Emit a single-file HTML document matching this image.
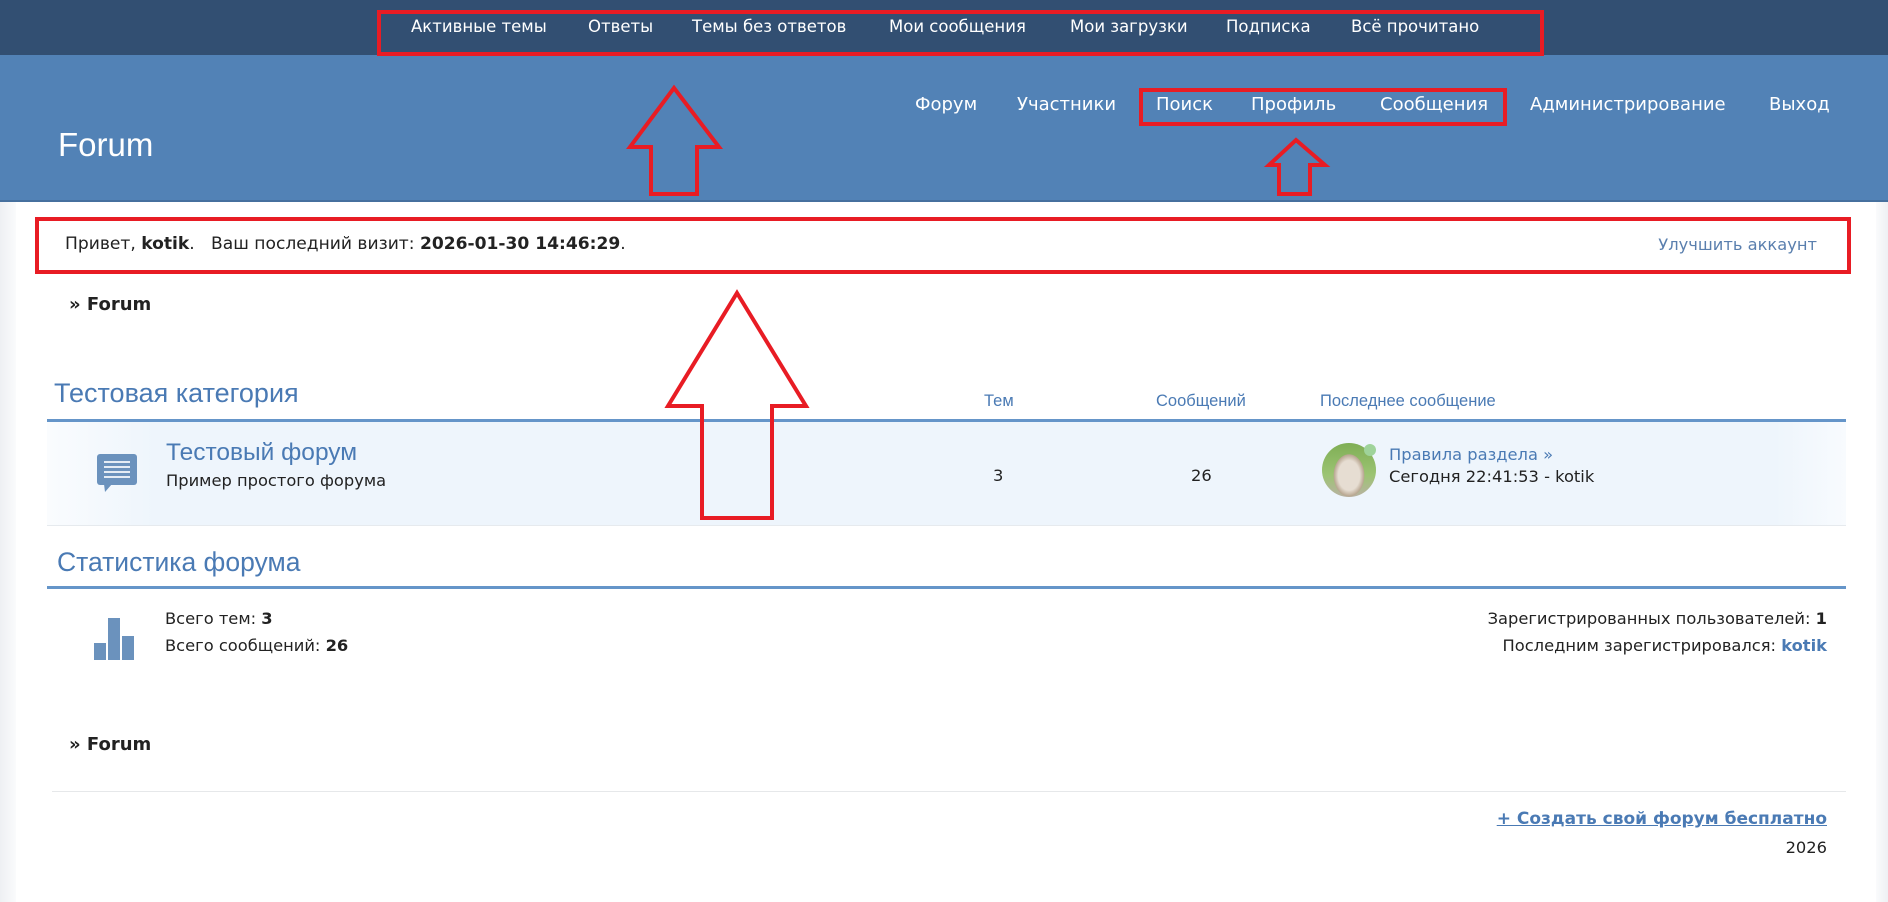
<!DOCTYPE html>
<html><head><meta charset="utf-8"><style>
*{margin:0;padding:0;box-sizing:border-box}
body{width:1888px;height:902px;position:relative;overflow:hidden;background:#fff;font-family:"DejaVu Sans","Liberation Sans",sans-serif;color:#222}
.a{position:absolute;white-space:nowrap}
.L{font-family:"Liberation Sans",Arial,sans-serif}
.top{left:0;top:0;width:1888px;height:55px;background:#324f72}
.hdr{left:0;top:55px;width:1888px;height:147px;background:#5282b6;border-bottom:2px solid #46709e}
.tn{top:17px;color:#fff;font-size:16.5px}
.sn{top:94px;color:#fff;font-size:18px}
.box{border:4px solid #e81c24}
.blue{color:#4a7ab4}
.lbl{font-size:16.5px;top:392px}
.t{font-size:16.3px}
</style></head><body>
<div class="a" style="left:0;top:202px;width:16px;height:700px;background:linear-gradient(90deg,#eef0f3,#fafbfc)"></div>
<div class="a" style="right:0;top:202px;width:12px;height:700px;background:linear-gradient(90deg,#fafbfc,#eef0f3)"></div>
<div class="a top"></div>
<div class="a hdr"></div>
<div class="a tn" style="left:411px">Активные темы</div>
<div class="a tn" style="left:588px">Ответы</div>
<div class="a tn" style="left:692px">Темы без ответов</div>
<div class="a tn" style="left:889px">Мои сообщения</div>
<div class="a tn" style="left:1070px">Мои загрузки</div>
<div class="a tn" style="left:1226px">Подписка</div>
<div class="a tn" style="left:1351px">Всё прочитано</div>
<div class="a box" style="left:377px;top:10px;width:1167px;height:46px"></div>
<div class="a sn" style="left:915px">Форум</div>
<div class="a sn" style="left:1017px">Участники</div>
<div class="a sn" style="left:1156px">Поиск</div>
<div class="a sn" style="left:1251px">Профиль</div>
<div class="a sn" style="left:1380px">Сообщения</div>
<div class="a sn" style="left:1530px">Администрирование</div>
<div class="a sn" style="left:1769px">Выход</div>
<div class="a box" style="left:1139px;top:88px;width:368px;height:38px"></div>
<div class="a L" style="left:58px;top:126px;color:#fff;font-size:33px">Forum</div>

<div class="a box" style="left:35px;top:217px;width:1816px;height:57px"></div>
<div class="a" style="left:65px;top:234px;font-size:17.1px">Привет, <b>kotik</b>.&nbsp;&nbsp; Ваш последний визит: <b>2026-01-30 14:46:29</b>.</div>
<div class="a t" style="right:71px;top:235px;color:#5a7fae">Улучшить аккаунт</div>
<div class="a" style="left:69px;top:294px;font-size:18px;font-weight:bold">» Forum</div>

<div class="a blue L" style="left:54px;top:378px;font-size:27px">Тестовая категория</div>
<div class="a blue lbl L" style="left:984px">Тем</div>
<div class="a blue lbl L" style="left:1156px">Сообщений</div>
<div class="a blue lbl L" style="left:1320px">Последнее сообщение</div>
<div class="a" style="left:47px;top:419px;width:1799px;height:3px;background:#6595c9"></div>
<div class="a" style="left:47px;top:422px;width:1799px;height:104px;background:linear-gradient(90deg,#fafcfe,#eef5fc 6%,#eef5fc 96%,#f8fbfe);border-bottom:1px solid #e6eaee"></div>
<svg class="a" style="left:96px;top:453px" width="42" height="40" viewBox="0 0 42 40"><rect x="1" y="1" width="40" height="31" rx="3" fill="#6b92bd"/><path d="M8 31 L9 39 L16 31Z" fill="#6b92bd"/><g stroke="#e4ecf5" stroke-width="2"><line x1="8" y1="9" x2="34" y2="9"/><line x1="8" y1="14" x2="34" y2="14"/><line x1="8" y1="19" x2="34" y2="19"/><line x1="8" y1="24" x2="34" y2="24"/></g></svg>
<div class="a blue L" style="left:166px;top:439px;font-size:24.5px">Тестовый форум</div>
<div class="a t" style="left:166px;top:471px">Пример простого форума</div>
<div class="a t" style="left:993px;top:466px">3</div>
<div class="a t" style="left:1191px;top:466px">26</div>
<div class="a" style="left:1322px;top:443px;width:54px;height:54px;border-radius:50%;background:radial-gradient(ellipse 40% 55% at 50% 60%,#e6ddd2 0 50%,#b8a690 70%,transparent 72%),linear-gradient(#7fae55,#9cc473 60%,#b9b1a2)"></div>
<div class="a" style="left:1364px;top:444px;width:12px;height:12px;border-radius:50%;background:#9fd39a"></div>
<div class="a blue t" style="left:1389px;top:445px">Правила раздела »</div>
<div class="a t" style="left:1389px;top:467px">Сегодня 22:41:53 - kotik</div>

<div class="a blue L" style="left:57px;top:547px;font-size:26.5px">Статистика форума</div>
<div class="a" style="left:47px;top:586px;width:1799px;height:3px;background:#6595c9"></div>
<svg class="a" style="left:93px;top:617px" width="44" height="44"><rect x="1" y="26" width="12" height="17" fill="#6b92bd"/><rect x="15" y="1" width="12" height="42" fill="#6b92bd"/><rect x="29" y="19" width="12" height="24" fill="#6b92bd"/></svg>
<div class="a t" style="left:165px;top:609px">Всего тем: <b>3</b></div>
<div class="a t" style="left:165px;top:636px">Всего сообщений: <b>26</b></div>
<div class="a t" style="right:61px;top:609px;text-align:right">Зарегистрированных пользователей: <b>1</b></div>
<div class="a t" style="right:61px;top:636px;text-align:right">Последним зарегистрировался: <b style="color:#4a7ab4">kotik</b></div>

<div class="a" style="left:69px;top:734px;font-size:18px;font-weight:bold">» Forum</div>
<div class="a" style="left:52px;top:791px;width:1794px;height:1px;background:#e6e8ea"></div>
<div class="a" style="right:61px;top:809px;font-size:17px;font-weight:bold;color:#4a7ab4;text-decoration:underline">+ Создать свой форум бесплатно</div>
<div class="a t" style="right:61px;top:838px">2026</div>

<svg class="a" style="left:0;top:0" width="1888" height="902">
<g fill="none" stroke="#e81c24" stroke-width="4" stroke-linejoin="miter">
<polygon points="674,88 719,147 697,147 697,194 651,194 651,147 630,147"/>
<polygon points="1296,140 1325,165 1310,165 1310,194 1279,194 1279,165 1269,165"/>
<polygon points="737,293 806,406 772,406 772,518 702,518 702,406 668,406"/>
</g></svg>
</body></html>
